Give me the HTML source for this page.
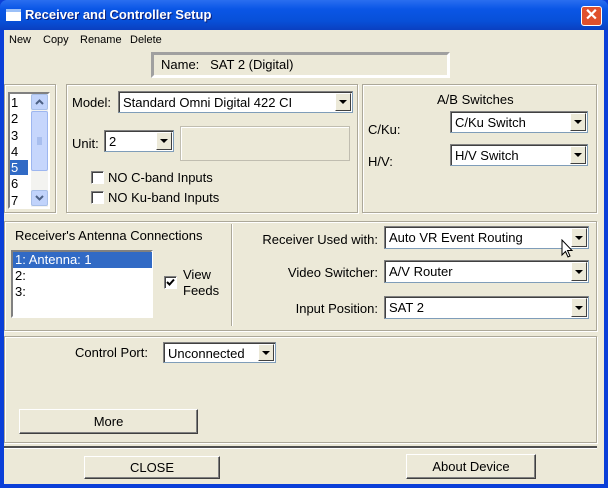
<!DOCTYPE html>
<html><head><meta charset="utf-8"><style>
*{box-sizing:border-box;margin:0;padding:0}
body{width:608px;height:488px;overflow:hidden;background:#0a3fd8;font-family:"Liberation Sans",sans-serif;font-size:12px;color:#000;position:relative}
.a{position:absolute}
#win{left:4px;top:30px;width:600px;height:454px;background:#ece9d8}
#title{left:0;top:0;width:608px;height:30px;background:linear-gradient(#2a6ef0,#0a56e6 30%,#0850d8 70%,#0a3fc0);border-radius:7px 7px 0 0}
.grp{border:1px solid #aca899;box-shadow:1px 1px 0 #fff inset,1px 1px 0 #fff}
.sunk{border:2px solid;border-color:#808080 #fff #fff #808080;background:#fff}
.combo{background:#fff;border:1px solid #7f9db9;border-top-color:#808080;border-left-color:#808080;box-shadow:inset 1px 1px 0 #404040}
.combo span{position:absolute;left:4px;top:3px;font-size:13px}
.combo i{position:absolute;right:1px;top:1px;bottom:1px;width:16px;background:#ece9d8;border:1px solid;border-color:#fff #404040 #404040 #fff}
.combo i:after{content:"";position:absolute;left:3px;top:50%;margin-top:-2px;border:4px solid transparent;border-top:4px solid #000;border-bottom:0}
.btn{background:#ece9d8;border:1px solid;border-color:#fff #404040 #404040 #fff;box-shadow:inset -1px -1px 0 #808080;text-align:center;font-size:13px}
.cb{width:13px;height:13px;background:#fff;border:1px solid #1c5180;border-color:#808080 #fff #fff #808080;box-shadow:inset 1px 1px 0 #404040}
.t13{font-size:13px}
.menu{font-size:11px;top:34px}
</style></head><body>
<div class="a" id="title"></div>
<div class="a" style="left:6px;top:9px;width:15px;height:12px;background:#fff;border-top:3px solid #9cc0f8"></div>
<div class="a" style="left:25px;top:7px;color:#fff;font-weight:bold;font-size:13px;text-shadow:1px 1px #0a1e78">Receiver and Controller Setup</div>
<div class="a" style="left:581px;top:6px;width:21px;height:20px;background:#e0502c;border:1px solid #fff;border-radius:3px;color:#fff;font-weight:bold;font-size:16px;line-height:18px;text-align:center">✕</div>
<div class="a" id="win"></div>
<div class="a menu" style="left:9px">New</div>
<div class="a menu" style="left:43px">Copy</div>
<div class="a menu" style="left:80px">Rename</div>
<div class="a menu" style="left:130px">Delete</div>
<div class="a" style="left:151px;top:52px;width:299px;height:26px;border:3px solid;border-color:#a0a0a0 #fff #fff #a0a0a0;background:#ece9d8"></div>
<div class="a t13" style="left:161px;top:57px">Name:&nbsp;&nbsp; SAT 2 (Digital)</div>

<div class="a grp" style="left:4px;top:84px;width:52px;height:129px"></div>
<div class="a sunk" style="left:8px;top:92px;width:42px;height:117px"></div>
<div class="a t13" style="left:11px;top:95px;line-height:16.3px">1<br>2<br>3<br>4<br><span style="background:#316ac5;color:#fff;padding:0 10px 0 1px;margin-left:-1px">5</span><br>6<br>7</div>
<div class="a" style="left:31px;top:94px;width:17px;height:113px;background:#f3f3f0"></div>
<div class="a" style="left:31px;top:94px;width:17px;height:16px;background:#c1d3fb;border:1px solid #a8bfe8;border-radius:2px"><svg width="15" height="14"><path d="M4 9 L7.5 5.5 L11 9" fill="none" stroke="#4d6185" stroke-width="2"/></svg></div>
<div class="a" style="left:31px;top:111px;width:17px;height:60px;background:#c6d6fc;border:1px solid #9db6f0;border-radius:2px"><svg width="15" height="58"><path d="M5 26h5M5 28h5M5 30h5M5 32h5" stroke="#8aa5e0"/></svg></div>
<div class="a" style="left:31px;top:190px;width:17px;height:16px;background:#c1d3fb;border:1px solid #a8bfe8;border-radius:2px"><svg width="15" height="14"><path d="M4 5 L7.5 8.5 L11 5" fill="none" stroke="#4d6185" stroke-width="2"/></svg></div>

<div class="a grp" style="left:66px;top:84px;width:292px;height:129px"></div>
<div class="a t13" style="left:72px;top:95px">Model:</div>
<div class="a combo" style="left:118px;top:91px;width:235px;height:22px"><span>Standard Omni Digital 422 CI</span><i></i></div>
<div class="a t13" style="left:72px;top:136px">Unit:</div>
<div class="a combo" style="left:104px;top:130px;width:70px;height:22px"><span>2</span><i></i></div>
<div class="a" style="left:180px;top:126px;width:170px;height:35px;border:1px solid #c0bdb0;box-shadow:inset 1px 1px 0 #fff"></div>
<div class="a cb" style="left:91px;top:171px"></div>
<div class="a t13" style="left:108px;top:170px">NO C-band Inputs</div>
<div class="a cb" style="left:91px;top:191px"></div>
<div class="a t13" style="left:108px;top:190px">NO Ku-band Inputs</div>

<div class="a grp" style="left:362px;top:84px;width:235px;height:129px"></div>
<div class="a t13" style="left:437px;top:92px">A/B Switches</div>
<div class="a t13" style="left:368px;top:122px">C/Ku:</div>
<div class="a combo" style="left:450px;top:111px;width:138px;height:22px"><span>C/Ku Switch</span><i></i></div>
<div class="a t13" style="left:368px;top:154px">H/V:</div>
<div class="a combo" style="left:450px;top:144px;width:138px;height:22px"><span>H/V Switch</span><i></i></div>

<div class="a grp" style="left:4px;top:221px;width:593px;height:110px"></div>
<div class="a" style="left:231px;top:224px;width:2px;height:102px;border-left:1px solid #aca899;border-right:1px solid #fff"></div>
<div class="a t13" style="left:15px;top:228px">Receiver's Antenna Connections</div>
<div class="a sunk" style="left:11px;top:250px;width:142px;height:68px"></div>
<div class="a t13" style="left:13px;top:252px;width:139px;line-height:16px"><div style="background:#316ac5;color:#fff;padding-left:2px">1: Antenna: 1</div><div style="padding-left:2px">2:</div><div style="padding-left:2px">3:</div></div>
<div class="a cb" style="left:164px;top:276px"><svg class="a" style="left:1px;top:1px" width="9" height="9"><path d="M1 4 L3.5 6.5 L8 1.5" fill="none" stroke="#000" stroke-width="2"/></svg></div>
<div class="a t13" style="left:183px;top:267px;line-height:16px">View<br>Feeds</div>
<div class="a t13" style="left:200px;top:232px;width:178px;text-align:right">Receiver Used with:</div>
<div class="a combo" style="left:384px;top:226px;width:205px;height:23px"><span>Auto VR Event Routing</span><i></i></div>
<div class="a t13" style="left:200px;top:265px;width:178px;text-align:right">Video Switcher:</div>
<div class="a combo" style="left:384px;top:260px;width:205px;height:23px"><span>A/V Router</span><i></i></div>
<div class="a t13" style="left:200px;top:301px;width:178px;text-align:right">Input Position:</div>
<div class="a combo" style="left:384px;top:296px;width:205px;height:23px"><span>SAT 2</span><i></i></div>
<svg class="a" style="left:561px;top:239px" width="14" height="20"><path d="M1 1 L1 16 L4.5 12.5 L7 18 L9 17 L6.5 11.5 L11 11.5 Z" fill="#fff" stroke="#000"/></svg>

<div class="a grp" style="left:4px;top:336px;width:593px;height:107px"></div>
<div class="a t13" style="left:75px;top:345px">Control Port:</div>
<div class="a combo" style="left:163px;top:342px;width:113px;height:21px"><span>Unconnected</span><i></i></div>
<div class="a btn" style="left:19px;top:409px;width:179px;height:25px;line-height:23px">More</div>
<div class="a" style="left:4px;top:446px;width:593px;height:3px;background:#505050;border-bottom:1px solid #fff"></div>
<div class="a btn" style="left:84px;top:456px;width:136px;height:23px;line-height:21px">CLOSE</div>
<div class="a btn" style="left:406px;top:454px;width:130px;height:25px;line-height:23px">About Device</div>
</body></html>
